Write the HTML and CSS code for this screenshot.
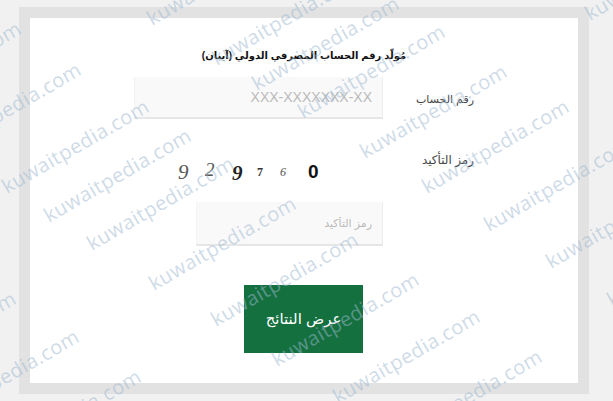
FILE: index.html
```html
<!DOCTYPE html>
<html lang="ar" dir="rtl">
<head>
  <meta charset="UTF-8" />
  <title>مولد رقم الحساب المصرفي الدولي (آيبان)</title>
  <link rel="stylesheet" href="styles.css">
</head>
<body>
  <div class="frame">
    <form class="card">
      <h1 class="title">مُولّد رقم الحساب المصرفي الدولي (آيبان)</h1>
      <div class="row row-account">
        <label class="label" for="iban">رقم الحساب</label>
        <input class="field field-wide" id="iban" type="text" placeholder="XXX-XXXXXXX-XX" />
      </div>
      <div class="row row-captcha">
        <label class="label" for="code">رمز التأكيد</label>
        <div class="captcha-box">
          <div class="captcha" dir="ltr">
            <span class="d d1">9</span>
            <span class="d d2">2</span>
            <span class="d d3">9</span>
            <span class="d d4">7</span>
            <span class="d d5">6</span>
            <span class="d d6">0</span>
          </div>
          <input class="field field-narrow" id="code" type="text" placeholder="رمز التأكيد" />
        </div>
      </div>
      <button class="submit" type="button">عرض النتائج</button>
    </form>
  </div>

  <svg class="watermark" width="613" height="401" viewBox="0 0 613 401" aria-hidden="true">
    <g transform="translate(4 4)">
      <text transform="translate(148 22) rotate(-30)">kuwaitpedia.com</text>
      <text transform="translate(213 62) rotate(-30)">kuwaitpedia.com</text>
      <text transform="translate(253 87) rotate(-30)">kuwaitpedia.com</text>
      <text transform="translate(299 115) rotate(-30)">kuwaitpedia.com</text>
      <text transform="translate(361 155) rotate(-30)">kuwaitpedia.com</text>
      <text transform="translate(423 190) rotate(-30)">kuwaitpedia.com</text>
      <text transform="translate(485 228) rotate(-30)">kuwaitpedia.com</text>
      <text transform="translate(547 265) rotate(-30)">kuwaitpedia.com</text>
      <text transform="translate(608 303) rotate(-30)">kuwaitpedia.com</text>
      <text transform="translate(586 17) rotate(-30)">kuwaitpedia.com</text>
      <text transform="translate(-125 112) rotate(-30)">kuwaitpedia.com</text>
      <text transform="translate(-65 153) rotate(-30)">kuwaitpedia.com</text>
      <text transform="translate(3 190) rotate(-30)">kuwaitpedia.com</text>
      <text transform="translate(45 219) rotate(-30)">kuwaitpedia.com</text>
      <text transform="translate(88 247) rotate(-30)">kuwaitpedia.com</text>
      <text transform="translate(150 287) rotate(-30)">kuwaitpedia.com</text>
      <text transform="translate(212 323) rotate(-30)">kuwaitpedia.com</text>
      <text transform="translate(273 363) rotate(-30)">kuwaitpedia.com</text>
      <text transform="translate(334 400) rotate(-30)">kuwaitpedia.com</text>
      <text transform="translate(396 440) rotate(-30)">kuwaitpedia.com</text>
      <text transform="translate(-130 382) rotate(-30)">kuwaitpedia.com</text>
      <text transform="translate(-67 420) rotate(-30)">kuwaitpedia.com</text>
      <text transform="translate(-5 460) rotate(-30)">kuwaitpedia.com</text>
    </g>
  </svg>
</body>
</html>
```

FILE: styles.css
```css
body {
  margin: 0;
  width: 613px;
  height: 401px;
  overflow: hidden;
  position: relative;
  background: #f1f1f1;
  font-family: "Liberation Sans", "DejaVu Sans", sans-serif;
  color: #333;
}
.frame {
  width: 548px;
  height: 365px;
  margin: 7px 24px 0 19px;
  border: 11px solid #e2e2e2;
  background: #fff;
}
.card {
  display: flex;
  flex-direction: column;
  height: 100%;
  padding: 0 104px 0 0;
  box-sizing: border-box;
}
.title {
  margin: 30px -104px 0 0;
  font-size: 10px;
  line-height: 16px;
  font-weight: bold;
  color: #111;
  text-align: center;
}
.row {
  display: flex;
  align-items: flex-start;
}
.row-account {
  margin-top: 13px;
}
.row-captcha {
  margin-top: 30px;
}
.label {
  width: 91px;
  flex: none;
  font-size: 11px;
  line-height: 16px;
  font-weight: normal;
  color: #444;
}
.row-account .label {
  margin-top: 14px;
}
.row-captcha .label {
  margin-top: 3px;
  font-size: 12px;
}
.field {
  height: 42px;
  box-sizing: border-box;
  padding: 0 10px;
  border: 0;
  border-left: 1px solid #f3f3f3;
  border-right: 1px solid #ececec;
  border-bottom: 2px solid #e6e6e6;
  background: #f9f9f9;
  font-family: "Liberation Sans", "DejaVu Sans", sans-serif;
  font-size: 14px;
  outline: none;
}
.field::placeholder {
  color: #b9b9b9;
  opacity: 1;
}
.field-wide {
  width: 249px;
}
.field-narrow {
  display: block;
  width: 187px;
  height: 44px;
  font-size: 11px;
}
.captcha-box {
  width: 249px;
}
.captcha {
  display: flex;
  align-items: center;
  height: 24px;
  margin: 11px 0 18px 44px;
  color: #555;
  font-family: "Liberation Serif", serif;
}
.d {
  display: block;
  line-height: 24px;
}
.d1 { width: 27px; font-size: 21px; font-style: italic; }
.d2 { width: 27px; font-size: 19px; font-style: italic; position: relative; top: -2px; }
.d3 { width: 25px; font-size: 21px; font-style: italic; font-weight: bold; color: #222; position: relative; top: 1px; }
.d4 { width: 23px; font-size: 12px; font-weight: bold; color: #333; }
.d5 { width: 28px; font-size: 12px; font-style: italic; }
.d6 { font-family: "Liberation Sans", sans-serif; font-size: 19px; font-weight: bold; color: #111; }
.submit {
  width: 119px;
  height: 68px;
  margin: 39px 111px 0 0;
  padding: 0;
  border: 0;
  background: #157040;
  color: #fff;
  font-family: "Liberation Sans", "DejaVu Sans", sans-serif;
  font-size: 15px;
}
.watermark {
  position: absolute;
  left: 0;
  top: 0;
  direction: ltr;
  pointer-events: none;
}
.watermark text {
  font-family: "Open Sans", sans-serif;
  font-size: 20px;
  letter-spacing: 0.5px;
  fill: #9db8d0;
  fill-opacity: 0.5;
}
```
